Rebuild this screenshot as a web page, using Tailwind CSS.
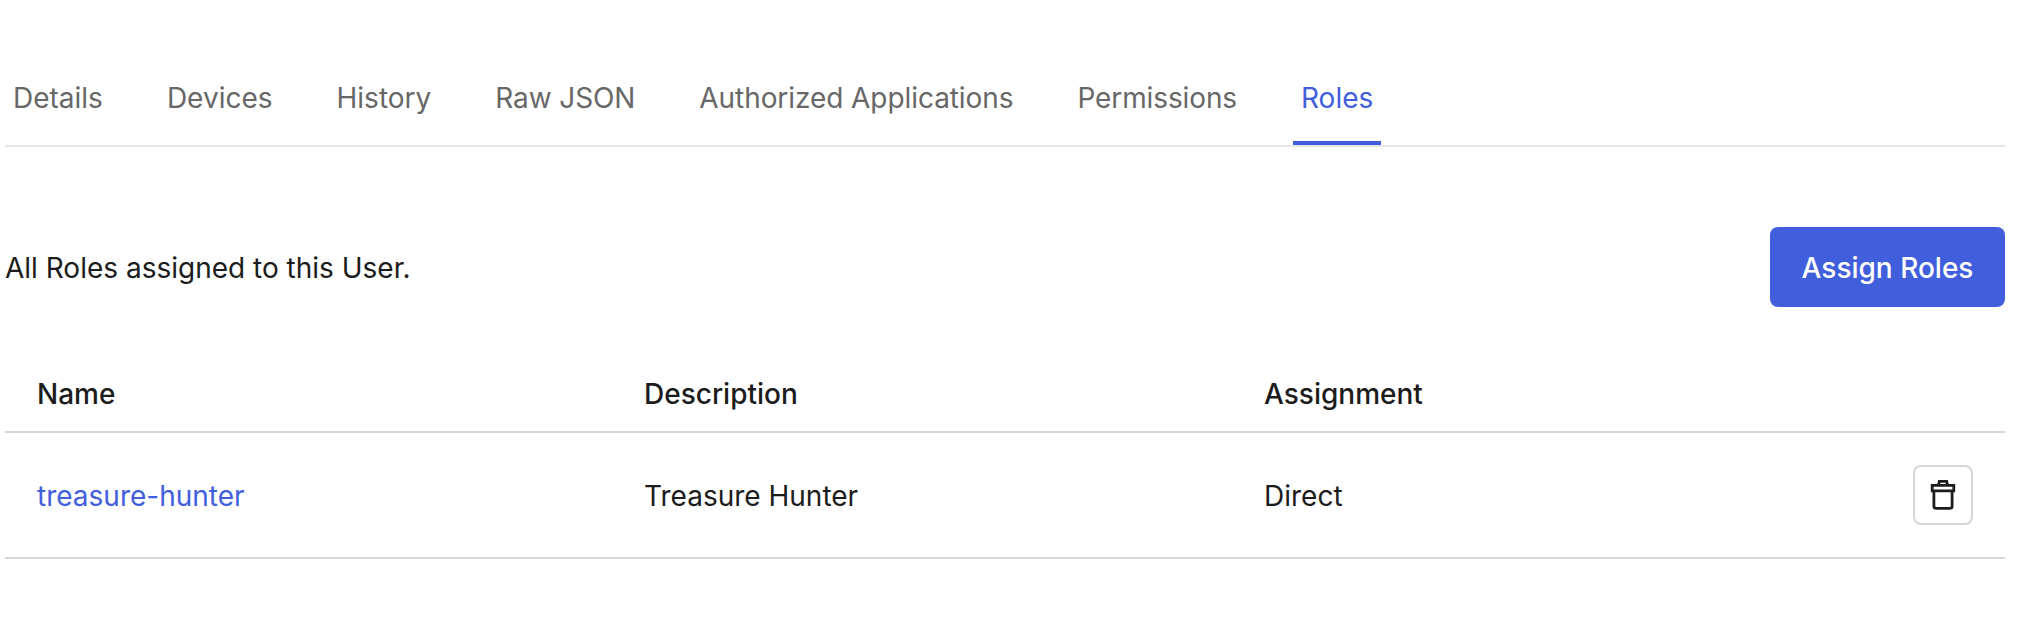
<!DOCTYPE html>
<html lang="en"><head><meta charset="utf-8"><title>Roles</title>
<script src="https://cdn.jsdelivr.net/npm/@tailwindcss/browser@4"></script></head>
<body class="bg-white font-['Inter',sans-serif] text-[28px] leading-[40px] text-[#1c1c1c]">
<main class="pl-[5px] pr-[31px] pt-[53px]">
<nav class="flex h-[94px] border-b-2 border-[#e6e6e6] text-[#676767]">
<a class="ml-2 mr-16 pt-[25px]">Details</a><a class="mr-16 pt-[25px]">Devices</a><a class="mr-16 pt-[25px]">History</a><a class="mr-16 pt-[25px] tracking-[-0.1px]">Raw JSON</a><a class="mr-16 pt-[25px] tracking-[-0.07px]">Authorized Applications</a><a class="mr-14 pt-[25px] tracking-[-0.12px]">Permissions</a><a class="h-[92px] border-b-4 border-[#415edc] px-2 pt-[25px] text-[#415edc]">Roles</a>
</nav>
<section class="mt-20 flex h-20 items-center justify-between"><p class="pt-0.5">All Roles assigned to this User.</p><button class="h-20 w-[235px] rounded-lg bg-[#415edc] pt-0.5 font-medium text-white">Assign Roles</button></section>
<table class="mt-12 w-full table-fixed border-separate border-spacing-0 text-left">
<thead><tr class="h-[78px] *:border-b-2 *:border-[#d6d6d6] *:pt-0.5 *:font-medium"><th class="w-[607px] pl-8">Name</th><th class="w-[620px] pl-8">Description</th><th class="pl-8">Assignment</th><th class="w-[124px]"></th></tr></thead>
<tbody><tr class="h-[126px] *:border-b-2 *:border-[#d6d6d6]"><td class="pl-8 pt-0.5 text-[#415edc]">treasure-hunter</td><td class="pl-8 pt-0.5">Treasure Hunter</td><td class="pl-8 pt-0.5">Direct</td><td class="pl-8"><button aria-label="Remove role" class="flex size-[60px] items-center justify-center rounded-lg border-2 border-[#d6d6d6]"><svg class="size-8" viewBox="0 0 32 32" fill="none" stroke="currentColor" stroke-width="2.8"><path d="M5.2 6.4h21.6v5.4H5.2zM11.4 6.4l.9-4h7.4l.9 4M6.9 11.8v15.4q0 2.2 2.2 2.2h13.8q2.2 0 2.2-2.2V11.8"/></svg></button></td></tr></tbody>
</table></main></body></html>
